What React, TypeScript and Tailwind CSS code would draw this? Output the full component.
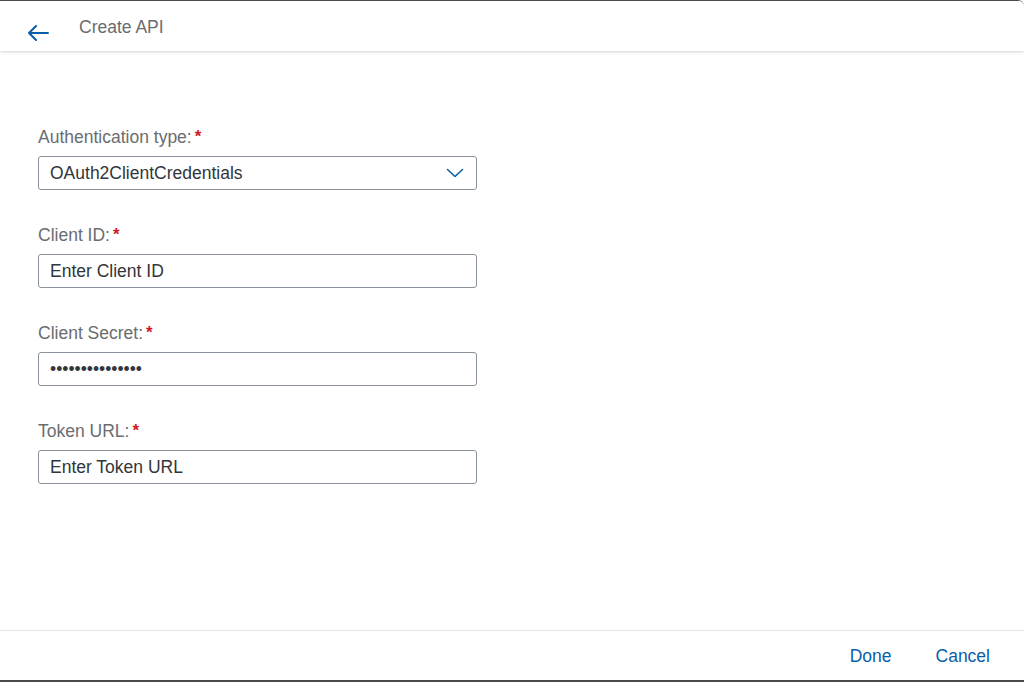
import React from "react";

const font = { fontFamily: '"Liberation Sans", Arial, sans-serif' };

function Label({ text }: { text: string }) {
  return (
    <div className="text-[17.5px] leading-[20px] text-[#6a6d70] flex items-start">
      <span>{text}</span>
      <span className="text-[#d0181f] font-bold ml-[3px] text-[17px] leading-[20px]">*</span>
    </div>
  );
}

function Field({ label, children }: { label: string; children: React.ReactNode }) {
  return (
    <div className="flex flex-col gap-[9px]">
      <Label text={label} />
      {children}
    </div>
  );
}

function Input({ value, className = "" }: { value: string; className?: string }) {
  return (
    <div className="h-[34px] w-[439px] border border-[#89919a] rounded-[3px] bg-white flex items-center px-[11px]">
      <span className={"text-[17.5px] text-[#32363a] " + className}>{value}</span>
    </div>
  );
}

export default function App() {
  return (
    <div
      className="w-[1024px] h-[682px] bg-white border-t border-b-2 border-[#4a4a4a] rounded-tr-[6px] flex flex-col overflow-hidden"
      style={font}
    >
      <div className="h-[50px] shrink-0 flex items-center shadow-[0_1px_3px_rgba(0,0,0,0.18)] relative z-10 bg-white">
        <div className="w-[79px] flex items-center pl-[27px] pt-[14px]">
          <svg width="22" height="16" viewBox="0 0 22 16" fill="none">
            <path d="M2 8 H21 M9 1 L2 8 L9 15" stroke="#0a5ea8" strokeWidth="2" strokeLinecap="round" strokeLinejoin="round" />
          </svg>
        </div>
        <span className="text-[17.5px] text-[#6a6d70] pt-[3px]">Create API</span>
      </div>

      <div className="flex-1 pl-[38px] pt-[76px] flex flex-col gap-[35px]">
        <Field label="Authentication type:">
          <div className="h-[34px] w-[439px] border border-[#89919a] rounded-[3px] bg-white flex items-center justify-between pl-[11px] pr-[12px]">
            <span className="text-[17.5px] text-[#32363a]">OAuth2ClientCredentials</span>
            <svg width="18" height="10" viewBox="0 0 18 10" fill="none">
              <path d="M1.5 1.5 L9 8.5 L16.5 1.5" stroke="#0a5ea8" strokeWidth="1.6" strokeLinecap="round" strokeLinejoin="round" />
            </svg>
          </div>
        </Field>
        <Field label="Client ID:">
          <Input value="Enter Client ID" />
        </Field>
        <Field label="Client Secret:">
          <Input value="•••••••••••••••" />
        </Field>
        <Field label="Token URL:">
          <Input value="Enter Token URL" />
        </Field>
      </div>

      <div className="h-[50px] shrink-0 border-t border-[#e5e5e5] flex items-center justify-end pr-[34px] gap-[44px]">
        <button className="text-[17.5px] text-[#0a5ea8] pt-[2px]">Done</button>
        <button className="text-[17.5px] text-[#0a5ea8] pt-[2px]">Cancel</button>
      </div>
    </div>
  );
}
